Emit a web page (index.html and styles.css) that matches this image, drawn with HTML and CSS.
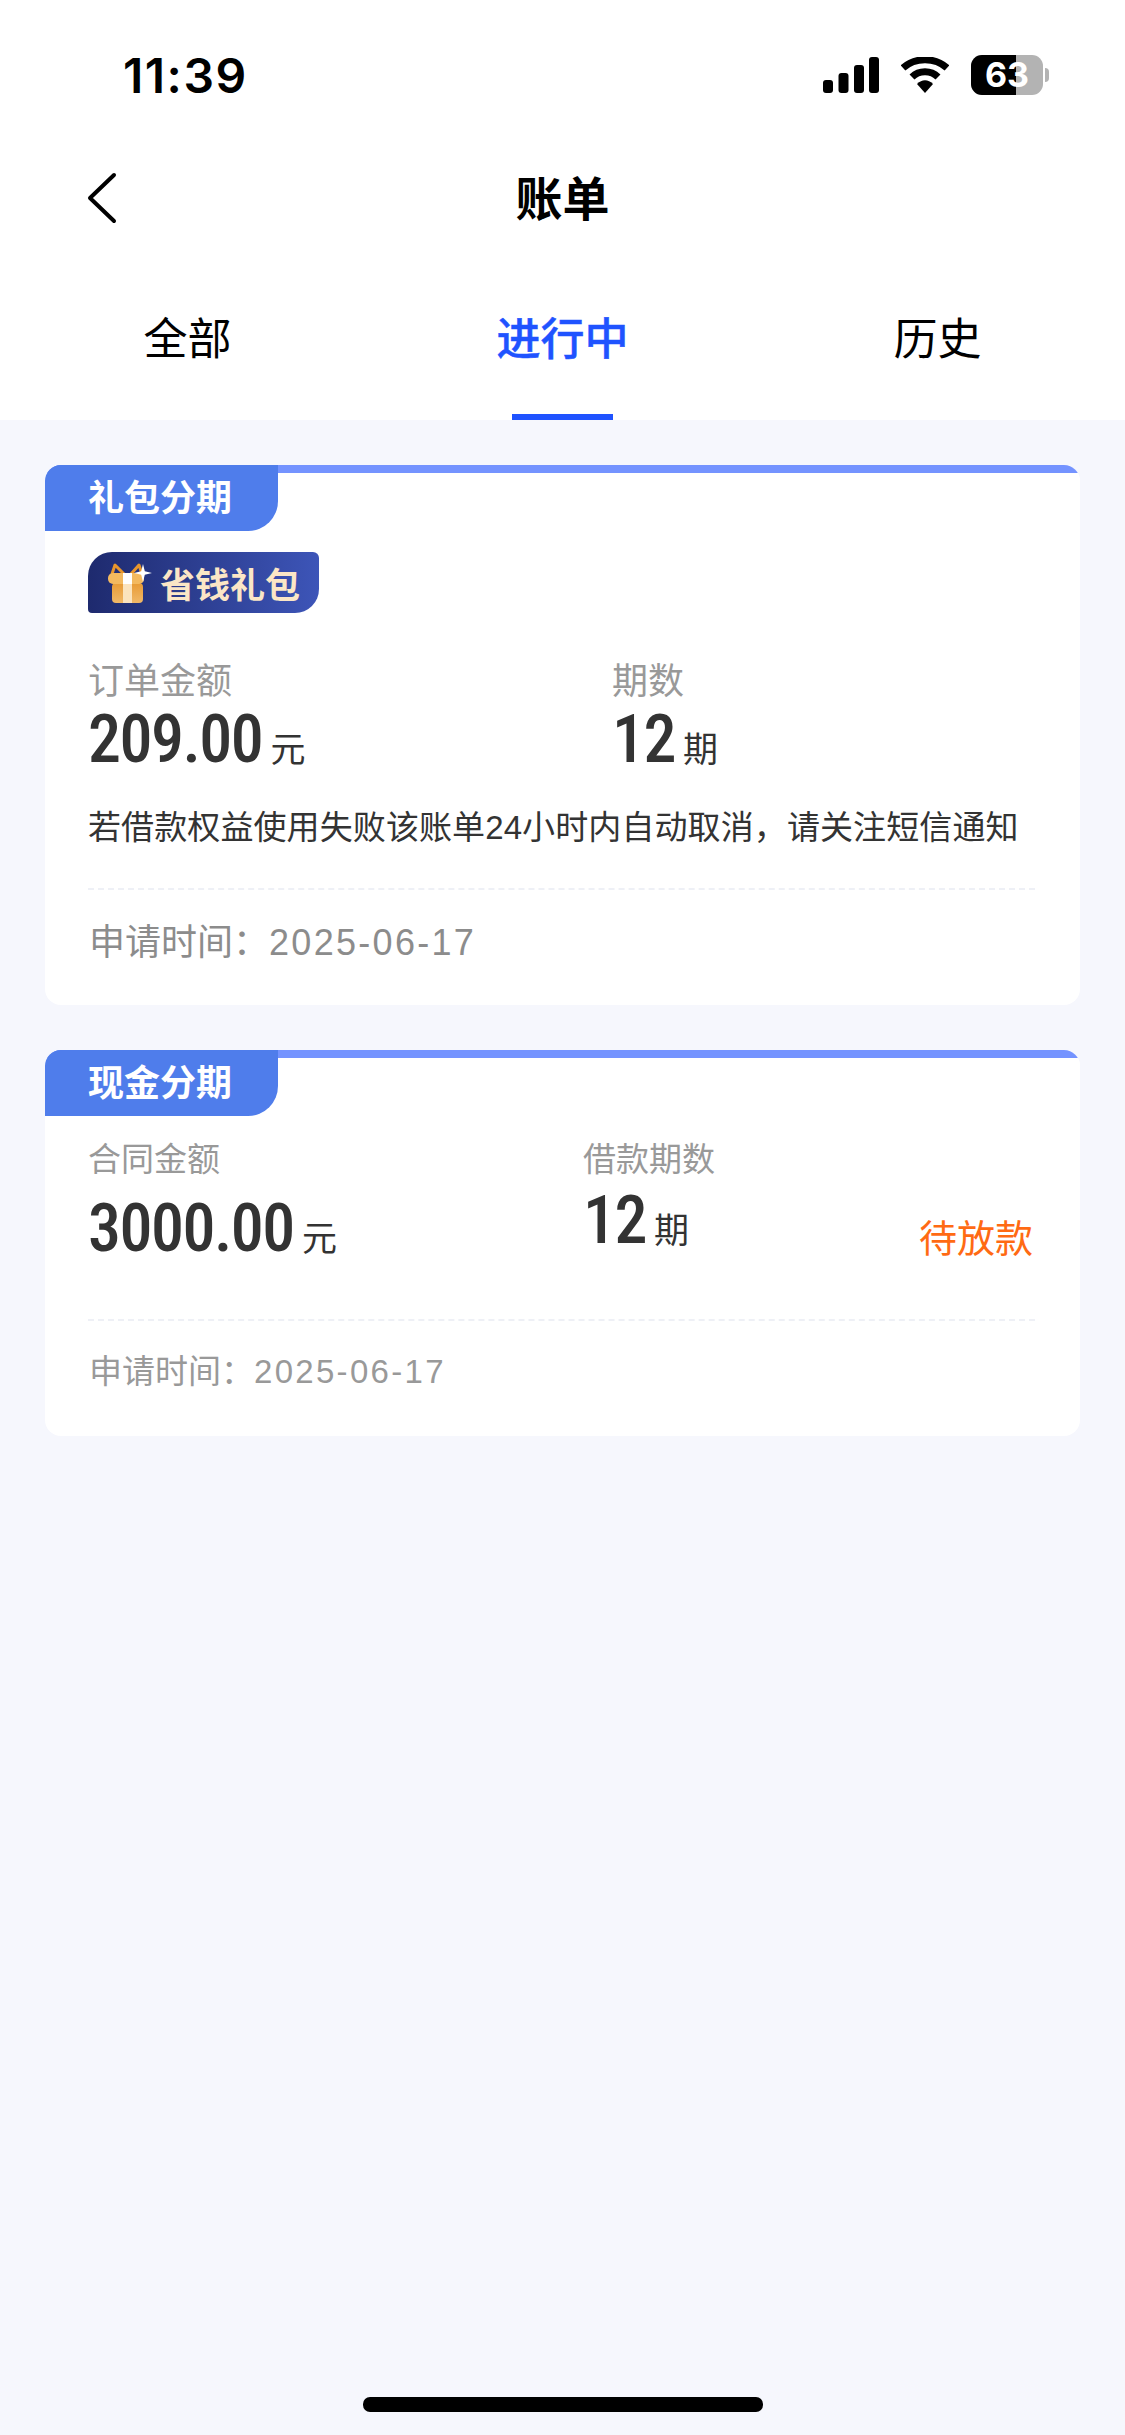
FILE: index.html
```html
<!DOCTYPE html>
<html lang="zh-CN">
<head>
    <meta charset="UTF-8">
    <meta name="viewport" content="width=device-width, initial-scale=1.0">
    <title>账单</title>
    <link rel="stylesheet" href="styles.css">
</head>
<body>
    <div class="page">
        <header class="top">
            <div class="status-bar">
                <span class="clock">11:39</span>
                <div class="status-icons">
                    <svg class="signal" width="56" height="36" viewBox="0 0 56 36">
                        <rect x="0" y="23" width="10" height="13" rx="3"/>
                        <rect x="15.5" y="16" width="10" height="20" rx="3"/>
                        <rect x="31" y="8" width="10" height="28" rx="3"/>
                        <rect x="46" y="0" width="10" height="36" rx="3"/>
                    </svg>
                    <svg class="wifi" width="48" height="36" viewBox="0 0 48 36">
                        <path d="M2 11 C14 0 34 0 46 11" fill="none" stroke="#000" stroke-width="7"/>
                        <path d="M11 20 C18 13 30 13 37 20" fill="none" stroke="#000" stroke-width="7"/>
                        <path d="M16 27 C21 22 27 22 32 27 L24 36 Z"/>
                    </svg>
                    <div class="battery">
                        <div class="battery-body">
                            <div class="battery-level"></div>
                            <span class="battery-num">63</span>
                        </div>
                        <div class="battery-cap"></div>
                    </div>
                </div>
            </div>
            <div class="nav-bar">
                <svg class="back" width="32" height="52" viewBox="0 0 32 52">
                    <path d="M28 3 L4 26 L28 49" fill="none" stroke="#000" stroke-width="4" stroke-linecap="round" stroke-linejoin="round"/>
                </svg>
                <h1 class="title">账单</h1>
            </div>
            <div class="tabs">
                <div class="tab">全部</div>
                <div class="tab active">进行中</div>
                <div class="tab">历史</div>
            </div>
        </header>

        <main class="list">
            <section class="card">
                <div class="card-head"><div class="tag">礼包分期</div></div>
                <div class="badge">
                    <svg class="gift" width="45" height="42" viewBox="0 0 45 42">
                        <defs>
                            <linearGradient id="box" x1="0" y1="0" x2="0" y2="1">
                                <stop offset="0" stop-color="#e89b35"/>
                                <stop offset="1" stop-color="#f0b868"/>
                            </linearGradient>
                        </defs>
                        <path d="M17 12 L8 3 L5 12 M24 12 L32 3 L35 12" fill="none" stroke="#e8962c" stroke-width="3" stroke-linejoin="round"/>
                        <rect x="5" y="21" width="31" height="20" rx="4" fill="url(#box)"/>
                        <rect x="1" y="11" width="36" height="11" rx="5" fill="#f3b95f"/>
                        <rect x="16" y="11" width="9" height="11" fill="#fff"/>
                        <rect x="16" y="22" width="9" height="19" fill="#fbe3bd"/>
                        <path d="M36 2 L37.8 9.2 L45 11 L37.8 12.8 L36 20 L34.2 12.8 L27 11 L34.2 9.2 Z" fill="#fff"/>
                    </svg>
                    <span class="badge-text">省钱礼包</span>
                </div>
                <div class="info info-first">
                    <div class="col col-left">
                        <div class="label">订单金额</div>
                        <div class="value"><span class="num">209.00</span><span class="unit">元</span></div>
                    </div>
                    <div class="col">
                        <div class="label">期数</div>
                        <div class="value"><span class="num">12</span><span class="unit">期</span></div>
                    </div>
                </div>
                <p class="note">若借款权益使用失败该账单24小时内自动取消，请关注短信通知</p>
                <div class="line"></div>
                <div class="apply-time">申请时间：<span class="date">2025-06-17</span></div>
            </section>

            <section class="card">
                <div class="card-head"><div class="tag">现金分期</div></div>
                <div class="info info-second">
                    <div class="col col-left2">
                        <div class="label small">合同金额</div>
                        <div class="value value-low"><span class="num">3000.00</span><span class="unit">元</span></div>
                    </div>
                    <div class="col">
                        <div class="label small">借款期数</div>
                        <div class="value value-mid"><span class="num">12</span><span class="unit">期</span></div>
                    </div>
                    <div class="state">待放款</div>
                </div>
                <div class="line line-second"></div>
                <div class="apply-time small">申请时间：<span class="date">2025-06-17</span></div>
            </section>
        </main>

        <div class="home-indicator"></div>
    </div>
</body>
</html>
```

FILE: styles.css
```css
* {
    box-sizing: border-box;
}

body {
    margin: 0;
    font-family: "Liberation Sans", "Noto Sans CJK SC", sans-serif;
    background-color: #f6f7fd;
}

.page {
    display: flex;
    flex-direction: column;
    height: 2435px;
    overflow: hidden;
}

.top {
    height: 420px;
    background: #fff;
}

.status-bar {
    display: flex;
    justify-content: space-between;
    align-items: center;
    height: 150px;
    padding: 0 76px 0 123px;
}

.clock {
    font-family: Inter, sans-serif;
    font-size: 48px;
    font-weight: 600;
    letter-spacing: 1.5px;
    color: #000;
}

.status-icons {
    display: flex;
    align-items: center;
}

.signal {
    margin-right: 22px;
}

.wifi {
    margin-right: 22px;
}

.battery {
    display: flex;
    align-items: center;
}

.battery-body {
    position: relative;
    width: 72px;
    height: 40px;
    background: #b3b3b3;
    border-radius: 11px;
    overflow: hidden;
}

.battery-level {
    width: 45px;
    height: 40px;
    background: #000;
}

.battery-num {
    position: absolute;
    top: 0;
    left: 0;
    width: 72px;
    text-align: center;
    font-family: Inter, sans-serif;
    font-size: 34px;
    line-height: 40px;
    font-weight: 700;
    color: #fff;
}

.battery-cap {
    width: 4px;
    height: 14px;
    margin-left: 2px;
    background: #b3b3b3;
    border-radius: 0 4px 4px 0;
}

.nav-bar {
    position: relative;
    display: flex;
    justify-content: center;
    align-items: center;
    height: 100px;
    padding-bottom: 10px;
}

.back {
    position: absolute;
    left: 86px;
    top: 22px;
}

.title {
    margin: 0;
    font-size: 47px;
    font-weight: 700;
    color: #000;
}

.tabs {
    display: flex;
    height: 170px;
}

.tab {
    flex: 1;
    position: relative;
    padding-top: 58px;
    text-align: center;
    font-size: 44px;
    line-height: 64px;
    color: #000;
}

.tab.active {
    color: #1f53ff;
    font-weight: 500;
    -webkit-text-stroke: 0.5px #1f53ff;
}

.tab.active::after {
    content: "";
    position: absolute;
    left: 137px;
    bottom: 0;
    width: 101px;
    height: 6px;
    background: #1f53ff;
}

.list {
    display: flex;
    flex-direction: column;
    gap: 45px;
    padding: 45px 45px 0;
}

.card {
    background: #fff;
    border-radius: 16px;
    overflow: hidden;
}

.card-head {
    height: 66px;
    background: linear-gradient(#7493ff 8px, #fff 8px);
}

.tag {
    width: 233px;
    height: 66px;
    padding-left: 43px;
    background: #4f7deb;
    border-radius: 0 0 30px 0;
    font-size: 36px;
    line-height: 68px;
    font-weight: 700;
    color: #fff;
}

.badge {
    display: inline-flex;
    align-items: center;
    height: 61px;
    margin: 21px 0 0 43px;
    padding: 0 19px;
    background: linear-gradient(90deg, #1e2a6e, #3d55b8);
    border-radius: 24px 6px 24px 4px;
}

.gift {
    margin-right: 8px;
}

.badge-text {
    font-size: 35px;
    font-weight: 700;
    color: #fbe6c6;
}

.info {
    display: flex;
    padding: 0 43px;
}

.info-first {
    margin-top: 47px;
}

.info-second {
    margin-top: 22px;
}

.col-left {
    width: 524px;
}

.col-left2 {
    width: 495px;
}

.label {
    font-size: 36px;
    line-height: 44px;
    color: #999;
}

.label.small {
    font-size: 33px;
}

.value {
    display: flex;
    align-items: baseline;
    color: #333;
}

.value-low {
    margin-top: 11px;
}

.value-mid {
    margin-top: 3px;
}

.num {
    font-family: "Roboto Condensed", Roboto, sans-serif;
    font-size: 66px;
    line-height: 72px;
    font-weight: 500;
    letter-spacing: -1.5px;
}

.unit {
    margin-left: 8px;
    font-size: 35px;
}

.state {
    margin: 0 4px -4px auto;
    align-self: flex-end;
    font-size: 38px;
    line-height: 60px;
    color: #ff6a13;
}

.note {
    margin: 29px 0 0;
    padding: 0 43px;
    font-size: 33px;
    line-height: 46px;
    letter-spacing: 0.1px;
    color: #333;
    white-space: nowrap;
}

.line {
    margin: 37px 45px 0 43px;
    border-top: 2px dashed #eef0f6;
}

.line-second {
    margin-top: 54px;
}

.apply-time {
    margin-top: 30px;
    padding: 0 45px 39px 44px;
    font-size: 36px;
    line-height: 46px;
    color: #8c8c8c;
}

.apply-time.small {
    margin-top: 28px;
    padding-bottom: 41px;
    font-size: 33px;
    color: #999;
}

.date {
    letter-spacing: 2.3px;
}

.home-indicator {
    position: absolute;
    left: 363px;
    top: 2397px;
    width: 400px;
    height: 15px;
    background: #000;
    border-radius: 7px;
}
```
